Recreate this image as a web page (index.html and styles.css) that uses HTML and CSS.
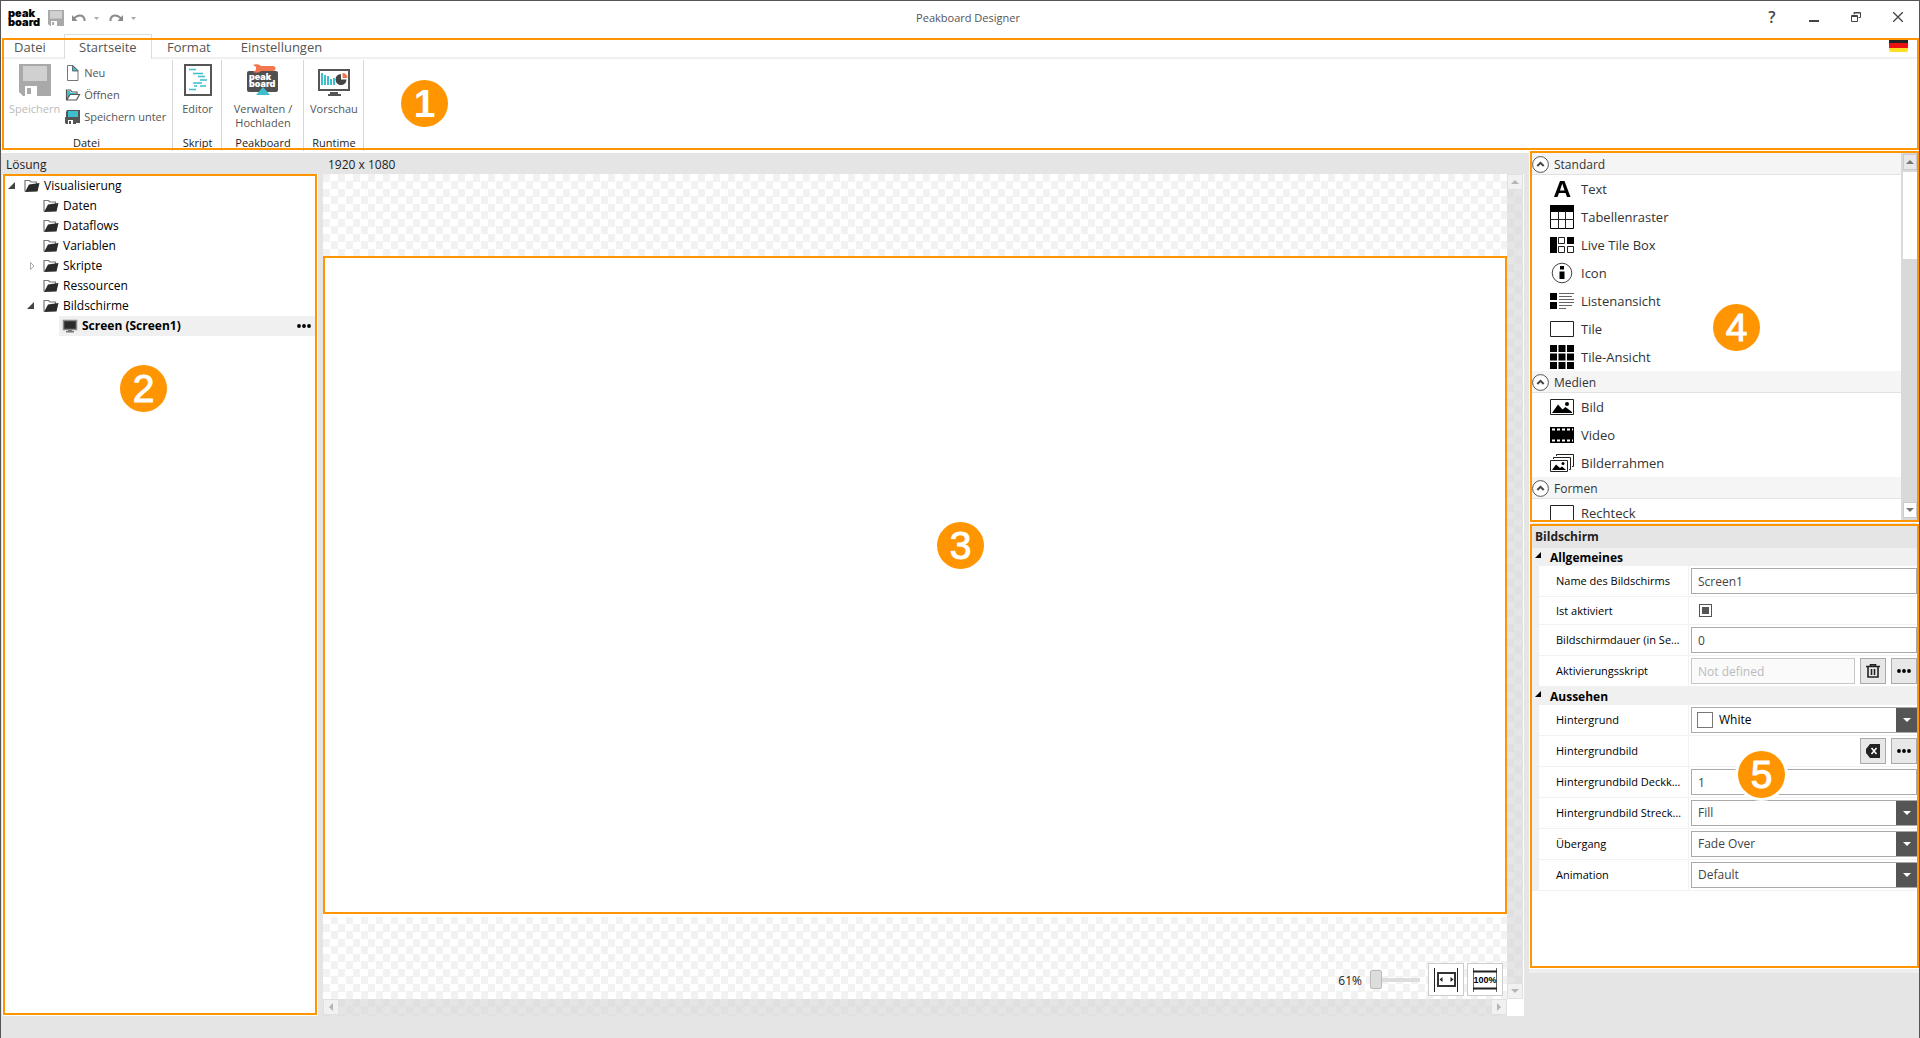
FILE: index.html
```html
<!DOCTYPE html>
<html lang="de">
<head>
<meta charset="utf-8">
<title>Peakboard Designer</title>
<link rel="stylesheet" href="styles.css">
</head>
<body>
<svg class="defs" aria-hidden="true">
  <symbol id="folder" viewBox="0 0 16 14"><path d="M1 12.500V1.500h4.500l1.500 1.500h5.500v2" fill="none" stroke="#777" stroke-width="1.200"/><path d="M1 13L5 5.500l10.500-1.500L13.500 12.500z" fill="#2b2b2b"/></symbol>
  <symbol id="disk" viewBox="0 0 32 32"><path d="M0 0h32v32H4l-4-4z" fill="#a9a9a9"/><path d="M4 2h24v15H4z" fill="#d0d0d0"/><path d="M6 22h12v10H6z" fill="#fff"/><path d="M8 24h4v6H8z" fill="#a9a9a9"/></symbol>
  <symbol id="chevron" viewBox="0 0 17 17"><circle cx="8.500" cy="8.500" r="7.900" fill="#fff" stroke="#555"/><path d="M5.300 10l3.200-3.200L11.700 10" fill="none" stroke="#444" stroke-width="2"/></symbol>
  <symbol id="dots" viewBox="0 0 14 4"><circle cx="2" cy="2" r="1.900"/><circle cx="7" cy="2" r="1.900"/><circle cx="12" cy="2" r="1.900"/></symbol>
  <symbol id="frame" viewBox="0 0 24 24"><path d="M.5 4.500h23v15H.5z" fill="#fff" stroke="#222"/></symbol>
</svg>

<header class="titlebar">
  <div class="quick">
    <div class="logo">peak<br>board</div>
    <button aria-label="Speichern"><svg width="16" height="16"><use href="#disk"/></svg></button>
    <button class="undo" aria-label="Rückgängig"><svg width="14" height="8" viewBox="0 0 14 8"><path d="M2 4.500C5 .5 11 0 12.500 5v2" fill="none" stroke="#8a8a8a" stroke-width="2"/><path d="M0 1v6h5.500z" fill="#8a8a8a"/></svg><svg width="5" height="3" viewBox="0 0 5 3"><path d="M0 0h5L2.500 3z" fill="#aaa"/></svg></button>
    <button class="undo" aria-label="Wiederholen"><svg width="14" height="8" viewBox="0 0 14 8"><path d="M12 4.500C9 .5 3 0 1.500 5v2" fill="none" stroke="#8a8a8a" stroke-width="2"/><path d="M14 1v6H8.500z" fill="#8a8a8a"/></svg><svg width="5" height="3" viewBox="0 0 5 3"><path d="M0 0h5L2.500 3z" fill="#aaa"/></svg></button>
  </div>
  <h1>Peakboard Designer</h1>
  <div class="window-buttons">
    <button aria-label="Hilfe" class="help">?</button>
    <button aria-label="Minimieren"><svg width="10" height="10" viewBox="0 0 10 10"><path d="M0 9h10" stroke="#444" stroke-width="2"/></svg></button>
    <button aria-label="Verkleinern"><svg width="10" height="10" viewBox="0 0 10 10"><path d="M3 2.500V.5h6.500v5H7.500M3 1h6" fill="none" stroke="#444"/><path d="M.5 3.500h6v6h-6zM1 4.500h5" fill="none" stroke="#444"/></svg></button>
    <button aria-label="Schließen"><svg width="10" height="10" viewBox="0 0 10 10"><path d="M0 0l10 10M10 0L0 10" stroke="#444" stroke-width="1.300"/></svg></button>
  </div>
</header>

<section class="ribbon marked">
  <nav class="tabs">
    <a href="#datei">Datei</a>
    <a href="#start" class="active">Startseite</a>
    <a href="#format">Format</a>
    <a href="#einstellungen">Einstellungen</a>
    <button class="flag" aria-label="Deutsch"></button>
  </nav>
  <div class="groups">
    <div class="group files">
      <div class="group-body">
        <button class="big" disabled><svg width="32" height="32"><use href="#disk"/></svg><span>Speichern</span></button>
        <div class="small-list">
          <button><svg width="16" height="16" viewBox="0 0 16 16"><path d="M2.500.5H8L13 5.500v10H2.500z" fill="#fff" stroke="#777"/><path d="M7.500.5L13 6H7.500z" fill="#3dbfcc" stroke="#555" stroke-width=".8"/></svg>Neu</button>
          <button><svg width="16" height="16" viewBox="0 0 16 16"><path d="M1.500 13V3h4l1.500 2h5v2.500" fill="#fff" stroke="#555" stroke-width="1.200"/><path d="M2 4h3l1 2h5v1.500H5L2 12z" fill="#3dbfcc"/><path d="M5 7.500h9.500L11.500 13H1.800z" fill="#fff" stroke="#555" stroke-width="1.200"/></svg>Öffnen</button>
          <button><svg width="16" height="16" viewBox="0 0 16 16"><path d="M2 1h13v13H9V9H1V3z" fill="#555"/><path d="M3 2h10v6H3z" fill="#3dbfcc"/><path d="M0 8h11v7H1l-1-1z" fill="#555"/><path d="M3 11h5v4H3z" fill="#fff"/><path d="M4 12h2v3H4z" fill="#555"/></svg>Speichern unter</button>
        </div>
      </div>
      <h2>Datei</h2>
    </div>
    <div class="group">
      <div class="group-body">
        <button class="big"><svg width="28" height="32" viewBox="0 0 28 32"><path d="M1 1h26v30H1z" fill="#fff" stroke="#555" stroke-width="2"/><path d="M5 5.500h7M9 9.500h10M14 12.500h7M16 16h7M9 19h9M16 22h6M10 22h3M5 25.500h7" stroke="#3dbfcc" stroke-width="1.600"/></svg><span>Editor</span></button>
      </div>
      <h2>Skript</h2>
    </div>
    <div class="group wide">
      <div class="group-body">
        <button class="big"><svg width="32" height="32" viewBox="0 0 32 32"><rect y="7" width="31" height="21" rx="2" fill="#505050"/><path d="M6 1c3-1 6-1 8 1h12a2.300 2.300 0 0 1 0 5H14c-2 2-5 2-8 1l3-2V3z" fill="#f4764f"/><text x="2" y="16" class="mini-logo">peak</text><text x="2" y="23" class="mini-logo">board</text><path d="M9 31l7-8 7 8z" fill="#3dbfcc"/></svg><span>Verwalten /<br>Hochladen</span></button>
      </div>
      <h2>Peakboard</h2>
    </div>
    <div class="group">
      <div class="group-body">
        <button class="big"><svg width="32" height="32" viewBox="0 0 32 32"><path d="M1 6h30v20H1z" fill="#fff" stroke="#555" stroke-width="2"/><path d="M12 28h8v2h3v2H10v-2h2z" fill="#555"/><path d="M4 9v12M7 11v10M10 12v9M13 15v6M16 14v7" stroke="#3dbfcc" stroke-width="2"/><path d="M23 10a5.500 5.500 0 1 0 5.500 5.500H23z" fill="#444"/><path d="M24.500 9a5 5 0 0 1 5 5h-5z" fill="#f4764f"/></svg><span>Vorschau</span></button>
      </div>
      <h2>Runtime</h2>
    </div>
  </div>
  <span class="badge one">1</span>
</section>

<main>
  <section class="solution">
    <h2 class="pane-title">Lösung</h2>
    <div class="tree-pane marked">
      <ul class="tree">
        <li><svg class="caret" viewBox="0 0 16 8"><path d="M7 0v7H0z" fill="#444"/></svg><svg class="ico"><use href="#folder"/></svg>Visualisierung</li>
        <li class="child"><i class="caret"></i><svg class="ico"><use href="#folder"/></svg>Daten</li>
        <li class="child"><i class="caret"></i><svg class="ico"><use href="#folder"/></svg>Dataflows</li>
        <li class="child"><i class="caret"></i><svg class="ico"><use href="#folder"/></svg>Variablen</li>
        <li class="child"><svg class="caret" viewBox="0 0 16 8"><path d="M3.500 .5L7 4 3.500 7.500z" fill="#fff" stroke="#aaa"/></svg><svg class="ico"><use href="#folder"/></svg>Skripte</li>
        <li class="child"><i class="caret"></i><svg class="ico"><use href="#folder"/></svg>Ressourcen</li>
        <li class="child"><svg class="caret" viewBox="0 0 16 8"><path d="M7 0v7H0z" fill="#444"/></svg><svg class="ico"><use href="#folder"/></svg>Bildschirme</li>
        <li class="leaf"><svg class="ico" viewBox="0 0 16 14"><path d="M1.500 1.500h13v9h-13z" fill="#2b2b2b" stroke="#888" stroke-width="1.500"/><path d="M6 11h4v1h2v1.500H4V12h2z" fill="#777"/></svg>Screen (Screen1)<button class="more" aria-label="Mehr"><svg width="14" height="4"><use href="#dots"/></svg></button></li>
      </ul>
      <span class="badge two">2</span>
    </div>
  </section>

  <section class="editor">
    <h2 class="pane-title">1920 x 1080</h2>
    <div class="viewport">
      <div class="stage">
        <div class="artboard marked"></div>
        <div class="zoom-tools">
          <label for="zoom">61%</label>
          <input id="zoom" type="range" min="0" max="100" value="0">
          <button aria-label="Einpassen"><svg width="24" height="26" viewBox="0 0 24 26"><path d="M.5 1v24M23.500 1v24" stroke="#222"/><path d="M4 6h17v13H4z" fill="#fff" stroke="#333" stroke-width="2"/><path d="M8.500 10v5L5.500 12.500zM16.500 10v5l3-2.500z" fill="#222"/></svg></button>
          <button aria-label="Originalgröße"><svg width="26" height="26" viewBox="0 0 26 26"><path d="M1.500 1v24M24.500 1v24" stroke="#666"/><path d="M1 4.500h24M1 21.500h24" stroke="#222" stroke-width="2"/><text x="13" y="16" class="hundred">100%</text></svg></button>
        </div>
      </div>
      <div class="vbar"><button aria-label="Nach oben"><svg width="8" height="4"><path d="M4 0l4 4H0z"/></svg></button><button aria-label="Nach unten"><svg width="8" height="4"><path d="M0 0h8L4 4z"/></svg></button></div>
      <div class="hbar"><button aria-label="Nach links"><svg width="4" height="8"><path d="M4 0v8L0 4z"/></svg></button><button aria-label="Nach rechts"><svg width="4" height="8"><path d="M0 0v8l4-4z"/></svg></button></div>
    </div>
    <span class="badge three">3</span>
  </section>

  <aside class="side">
    <section class="palette marked">
      <div class="palette-list">
        <h3><svg width="17" height="17"><use href="#chevron"/></svg>Standard</h3>
        <ul>
          <li><svg viewBox="0 0 24 24"><path d="M4 20L10 4h4.500L20.500 20H17L15.500 16H9L7.500 20zM10 13.500h4.500L12.200 6.500z" fill="#000" fill-rule="evenodd"/></svg>Text</li>
          <li><svg viewBox="0 0 24 24"><path d="M.5.5h23v23H.5z" fill="#fff" stroke="#000"/><path d="M0 0h24v7H0z"/><path d="M8.500 6v18M15.500 6v18M0 14.500h24" stroke="#222"/></svg>Tabellenraster</li>
          <li><svg viewBox="0 0 24 24"><path d="M0 4h7v16H0zM17 4h7v7h-7z"/><path d="M8.500 4.500h6v6h-6zM8.500 13.500h6v6h-6zM17.500 13.500h6v6h-6z" fill="#fff" stroke="#222"/></svg>Live Tile Box</li>
          <li><svg viewBox="0 0 24 24"><circle cx="12" cy="12" r="9.800" fill="#fff" stroke="#444"/><path d="M10 5h4v3.500h-4zM9.500 10.500h5V18h-5z"/></svg>Icon</li>
          <li><svg viewBox="0 0 24 24"><path d="M0 4h7v7H0zM0 13h7v7H0z"/><path d="M9 4.500h15M9 7.500h13M9 10.500h15M9 13.500h15M9 16.500h13M9 19.500h7" stroke="#666"/></svg>Listenansicht</li>
          <li><svg><use href="#frame"/></svg>Tile</li>
          <li><svg viewBox="0 0 24 24"><path d="M0 0h7v7H0zM8.500 0h7v7h-7zM17 0h7v7h-7zM0 8.500h7v7H0zM8.500 8.500h7v7h-7zM17 8.500h7v7h-7zM0 17h7v7H0zM8.500 17h7v7h-7zM17 17h7v7h-7z"/></svg>Tile-Ansicht</li>
        </ul>
        <h3><svg width="17" height="17"><use href="#chevron"/></svg>Medien</h3>
        <ul>
          <li><svg viewBox="0 0 24 24"><path d="M.5 4.500h23v15H.5z" fill="#fff" stroke="#222"/><path d="M2 18l6-8.500 4.500 5 3-2.500L22 17v1z"/><circle cx="17" cy="9" r="2"/></svg>Bild</li>
          <li><svg viewBox="0 0 24 24"><path d="M0 4h24v16H0z"/><path d="M2 6.500h21M2 17.500h21" stroke="#fff" stroke-width="2" stroke-dasharray="3 2"/></svg>Video</li>
          <li><svg viewBox="0 0 24 24"><path d="M6.500 5V3.500h17v12H22M3.500 8V6.500h17v12H19" fill="none" stroke="#222"/><path d="M.5 9.500h17v11H.5z" fill="#fff" stroke="#222"/><path d="M2 19l4-5.500 4 3.500 2-1.500 4 3.500z"/><circle cx="13" cy="12.500" r="1.500"/></svg>Bilderrahmen</li>
        </ul>
        <h3><svg width="17" height="17"><use href="#chevron"/></svg>Formen</h3>
        <ul>
          <li><svg><use href="#frame"/></svg>Rechteck</li>
        </ul>
      </div>
      <div class="palette-bar"><button aria-label="Nach oben"><svg width="8" height="4"><path d="M4 0l4 4H0z"/></svg></button><div class="thumb"></div><button class="down" aria-label="Nach unten"><svg width="8" height="4"><path d="M0 0h8L4 4z"/></svg></button></div>
      <span class="badge four">4</span>
    </section>

    <section class="properties marked">
      <h2>Bildschirm</h2>
      <h3><svg width="6" height="6"><path d="M6 0v6H0z"/></svg>Allgemeines</h3>
      <div class="rows">
        <div class="row"><label for="p-name">Name des Bildschirms</label><div><input id="p-name" type="text" value="Screen1"></div></div>
        <div class="row low"><label for="p-on">Ist aktiviert</label><div><input id="p-on" type="checkbox" checked></div></div>
        <div class="row"><label for="p-time">Bildschirmdauer (in Sekunden)</label><div><input id="p-time" type="text" value="0"></div></div>
        <div class="row"><label for="p-script">Aktivierungsskript</label><div><input id="p-script" type="text" placeholder="Not defined" disabled><button aria-label="Löschen"><svg width="14" height="14" viewBox="0 0 14 14"><path d="M0 2.500h14M4.500 2V.8h5V2" fill="none" stroke="#222" stroke-width="1.600"/><path d="M2 3v10h10V3M5.500 5v6M8.500 5v6" fill="none" stroke="#222" stroke-width="1.600"/></svg></button><button aria-label="Bearbeiten"><svg width="14" height="4"><use href="#dots"/></svg></button></div></div>
      </div>
      <h3><svg width="6" height="6"><path d="M6 0v6H0z"/></svg>Aussehen</h3>
      <div class="rows">
        <div class="row"><label for="p-bg">Hintergrund</label><div class="color"><span class="swatch"></span><select id="p-bg"><option>White</option></select></div></div>
        <div class="row"><label for="p-img">Hintergrundbild</label><div class="end"><button id="p-img" aria-label="Entfernen"><svg width="14" height="14" viewBox="0 0 14 14"><path d="M4 0h10v14H4L0 9V5z" fill="#222"/><path d="M5.500 4l5 6M10.500 4l-5 6" stroke="#fff" stroke-width="1.500"/></svg></button><button aria-label="Auswählen"><svg width="14" height="4"><use href="#dots"/></svg></button></div></div>
        <div class="row"><label for="p-alpha">Hintergrundbild Deckkraft</label><div><input id="p-alpha" type="text" value="1"></div></div>
        <div class="row"><label for="p-stretch">Hintergrundbild Streckung</label><div><select id="p-stretch"><option>Fill</option></select></div></div>
        <div class="row"><label for="p-trans">Übergang</label><div><select id="p-trans"><option>Fade Over</option></select></div></div>
        <div class="row"><label for="p-anim">Animation</label><div><select id="p-anim"><option>Default</option></select></div></div>
      </div>
      <span class="badge five">5</span>
    </section>
  </aside>
</main>
</body>
</html>
```
FILE: styles.css
```css
* { box-sizing: border-box; }

:root {
  --mark: #ff9500;
  --grey: #e5e5e5;
  --line: #f0f0f0;
}

body {
  margin: 0;
  min-height: 100vh;
  display: flex;
  flex-direction: column;
  border: 1px solid #555;
  border-bottom: 0;
  background: var(--grey);
  color: #222;
  font: 12px/16px "Open Sans", "Noto Sans", sans-serif;
}

h1, h2, h3, ul { margin: 0; padding: 0; font-size: 12px; font-weight: 400; }
ul { list-style: none; }
button, input, select { font: inherit; color: inherit; }
button { display: flex; align-items: center; justify-content: center; padding: 0; border: 0; background: none; }
a { color: inherit; text-decoration: none; }
svg { display: block; flex: none; }
.defs { position: absolute; width: 0; height: 0; }

/* Orange outline drawn over a region */
.marked { position: relative; }
.marked::after {
  content: "";
  position: absolute;
  inset: 0;
  border: 2px solid var(--mark);
  pointer-events: none;
}

.badge {
  position: absolute;
  width: 47px;
  height: 47px;
  border-radius: 50%;
  background: var(--mark);
  color: #fff;
  font: 39px/47px "Liberation Sans", Arial, sans-serif;
  -webkit-text-stroke: 1px #fff;
  text-align: center;
  z-index: 2;
}
.one { left: 400px; top: 46px; font-weight: 700; -webkit-text-stroke: 0; }
.two { left: 118px; top: 191px; }
.three { left: 614px; top: 369px; }
.four { left: 184px; top: 151px; }
.five { left: 209px; top: 228px; box-shadow: 0 0 0 3px #fff; }

/* Title bar */
.titlebar {
  display: grid;
  grid-template-columns: 1fr auto 1fr;
  height: 33px;
  background: #fff;
}
.titlebar h1 { padding-left: 16px; font-size: 11px; line-height: 34px; color: #555; }
.quick { display: flex; align-items: center; gap: 8px; padding-left: 7px; }
.logo { width: 32px; color: #000; font: 900 11px/9px Inter, sans-serif; }
.undo { gap: 8px; margin-right: 2px; }
.window-buttons { display: flex; justify-content: flex-end; }
.window-buttons button { width: 42px; padding-bottom: 2px; }
.window-buttons .help { font-size: 16px; font-weight: 600; color: #444; }

/* Ribbon */
.ribbon { background: #fff; height: 119px; }
.ribbon::after { inset: 4px 0 3px 1px; }
.tabs {
  display: flex;
  height: 25px;
  font-size: 13px;
  line-height: 24px;
  color: #555;
  box-shadow: inset 0 -2px var(--line);
}
.tabs a { padding: 0 14px; border: 1px solid transparent; border-width: 1px 1px 0; }
.tabs a:first-child { width: 63px; padding: 0 12px; }
.tabs .active { width: 88px; padding: 0 14px; background: #fff; border-color: #ddd; }
.flag {
  width: 19px;
  height: 14px;
  margin: 4px 11px 0 auto;
  border-radius: 2px;
  background: linear-gradient(#222 5px, #e11 5px 10px, #fd2 10px);
}
.groups { display: flex; height: 94px; padding-top: 1px; font-size: 11px; }
.group {
  display: flex;
  flex-direction: column;
  justify-content: space-between;
  min-width: 49px;
  height: 91px;
  padding: 4px 5px 0 6px;
  border-right: 1px solid #d6d6d6;
  color: #555;
}
.files { width: 172px; padding: 4px 0 0 8px; }
.files h2 { padding-right: 8px; }
.wide { width: 82px; }
.group h2 { text-align: center; font-size: 11px; color: #222; }
.group-body { display: flex; gap: 5px; }
.big {
  flex: 1;
  flex-direction: column;
  justify-content: flex-start;
  gap: 6px;
  line-height: 14px;
}
.files .big { flex: none; }
.big:disabled { color: #bbb; }
.small-list { margin-top: -2px; }
.small-list button { height: 22px; gap: 3px; }
.mini-logo { font: 900 9px Inter, sans-serif; fill: #fff; }

/* Work area */
main {
  flex: 1;
  display: grid;
  grid-template-columns: 317px 1fr 390px;
  gap: 5px;
}
.pane-title { height: 21px; line-height: 23px; padding-left: 5px; }
.solution, .editor { display: flex; flex-direction: column; padding-bottom: 22px; }
.editor { position: relative; }

.tree-pane { flex: 1; margin-left: 1px; background: #fff; padding-top: 2px; color: #000; }
.tree-pane::after { inset: 0 1px 1px; }
.tree li { display: flex; align-items: center; height: 20px; padding-left: 6px; }
.tree .child { padding-left: 25px; }
.tree .leaf { margin: 0 3px 0 57px; padding-left: 3px; background: #f0f0f0; font-weight: 700; }
.caret { width: 16px; height: 8px; }
.ico { width: 16px; height: 14px; margin-right: 4px; }
.more { margin: 0 4px 0 auto; }

.viewport {
  flex: 1;
  display: grid;
  grid-template: 1fr 17px / 1fr 17px;
  background: #fff;
}
.stage {
  position: relative;
  display: flex;
  flex-direction: column;
  justify-content: center;
  padding-bottom: 3px;
  background: conic-gradient(#fff 25%, #f2f2f2 0 50%, #fff 0 75%, #f2f2f2 0) 0 0 / 15px 15px;
}
.artboard { aspect-ratio: 1184 / 658; background: #fff; box-shadow: 0 3px #fff; }
.vbar, .hbar {
  display: flex;
  justify-content: space-between;
  background: conic-gradient(#e5e5e5 25%, #e0e0e0 0 50%, #e5e5e5 0 75%, #e0e0e0 0) 0 0 / 15px 15px;
}
.vbar { flex-direction: column; border-right: 1px solid #fff; }
.vbar button, .hbar button {
  width: 16px;
  height: 16px;
  border: 1px solid #e0e0e0;
  background: #f1f1f1;
  fill: #b5b5b5;
}
.zoom-tools { position: absolute; right: 4px; bottom: 3px; display: flex; align-items: center; gap: 3px; }
.zoom-tools label { padding: 2px 5px 0 0; }
.zoom-tools input { appearance: none; width: 50px; height: 20px; margin: 0 5px 0 0; background: linear-gradient(#ddd, #ddd) 0 center / 100% 4px no-repeat; }
.zoom-tools input::-webkit-slider-thumb { appearance: none; width: 12px; height: 19px; border: 1px solid #bbb; border-radius: 2px; background: #ddd; }
.zoom-tools button { width: 36px; height: 33px; border: 1px solid #ccc; background: #fff; }
.hundred { font: 700 9px "Liberation Sans", Arial, sans-serif; text-anchor: middle; }

/* Element palette */
.palette { display: flex; height: 370px; padding: 0 2px 3px 3px; background: #fff; }
.palette::after { inset: -2px 0 1px 1px; }
.palette-list { flex: 1; overflow: hidden; color: #333; }
.palette h3 {
  display: flex;
  align-items: center;
  gap: 5px;
  height: 22px;
  padding-top: 2px;
  background: #f5f5f5;
  border-bottom: 1px solid #e2e2e2;
}
.palette li { display: flex; align-items: center; gap: 7px; height: 28px; padding-left: 18px; font-size: 13px; }
.palette li svg { width: 24px; height: 24px; }
.palette-bar { display: flex; flex-direction: column; width: 16px; padding: 1px 0 2px 2px; background: #d9d9d9; }
.palette-bar button { height: 16px; background: #e8e8e8; fill: #777; border: 1px solid #ccc; }
.palette-bar .thumb { height: 87px; margin-top: 2px; background: #fff; }
.palette-bar .down { margin-top: auto; background: #fff; }

/* Properties */
.properties { min-height: 450px; padding: 0 2px 0 3px; background: #fff; border-bottom: 4px solid #eee; color: #000; }
.properties::after { inset: 1px 0 1px 1px; }
.properties h2 { height: 25px; padding: 0 3px; line-height: 27px; background: var(--grey); font-weight: 700; color: #222; }
.properties h3 { display: flex; align-items: center; gap: 9px; height: 18px; padding: 1px 0 0 3px; background: var(--line); font-weight: 700; }
.properties h3 svg { margin-bottom: 5px; }
.rows { border-left: 7px solid var(--line); }
.row { display: flex; height: 31px; border-bottom: 1px solid #f2f2f2; }
.low { height: 28px; }
.row label {
  flex: none;
  width: 150px;
  padding: 0 5px 0 17px;
  border-right: 1px solid #f2f2f2;
  font-size: 11px;
  line-height: 29px;
  white-space: nowrap;
  overflow: hidden;
  text-overflow: ellipsis;
}
.low label { line-height: 27px; }
.row > div { position: relative; flex: 1; min-width: 0; display: flex; align-items: center; gap: 5px; padding-left: 2px; }
.row .end { justify-content: flex-end; }
.row input[type=text], .row select {
  flex: 1;
  min-width: 0;
  height: 26px;
  padding: 0 6px;
  border: 1px solid #aaa;
  border-radius: 0;
  background: #fff;
  color: #444;
}
.row input[type=text]:disabled { background: #fafafa; border-color: #c8c8c8; }
.row input::placeholder { color: #bbb; }
.row select {
  appearance: none;
  border-right: 0;
  background: #fff url("data:image/svg+xml,%3Csvg xmlns='http://www.w3.org/2000/svg' width='21' height='24'%3E%3Cpath d='M0 0h21v24H0z' fill='%23555'/%3E%3Cpath d='M7 10h8l-4 4z' fill='%23fff'/%3E%3C/svg%3E") right center no-repeat;
}
.row .color select { padding-left: 27px; color: #000; }
.swatch { position: absolute; left: 8px; width: 16px; height: 16px; border: 1px solid #777; background: #fff; }
.row button { flex: none; width: 26px; height: 26px; border: 1px solid #aaa; background: #e8e8e8; }
.row input[type=checkbox] { appearance: none; width: 13px; height: 13px; margin: 0 0 0 8px; border: 1px solid #555; background: #555 content-box; padding: 2px; }
```
